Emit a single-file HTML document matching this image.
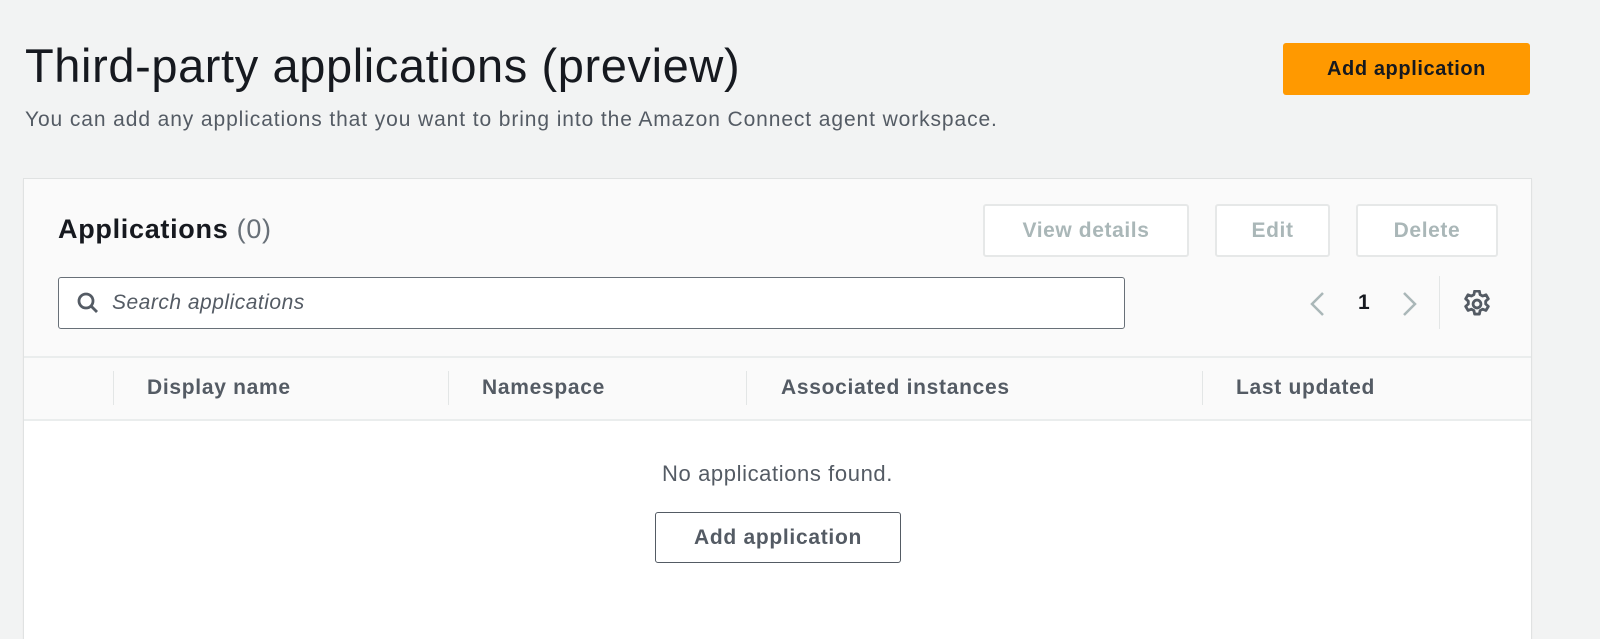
<!DOCTYPE html>
<html><head><meta charset="utf-8"><style>
*{box-sizing:border-box;margin:0;padding:0}
body{width:1600px;height:607px;overflow:hidden;background:#f2f3f3;font-family:"Liberation Sans",sans-serif;color:#16191f;position:relative}
.abs{position:absolute}
h1{position:absolute;left:25px;top:38px;font-size:47px;font-weight:400;letter-spacing:0.6px;color:#16191f;white-space:nowrap}
.sub{left:25px;top:108px;font-size:21px;letter-spacing:0.9px;color:#545b64;white-space:nowrap}
.primary{left:1283px;top:43px;width:247px;height:52px;background:#ff9900;border-radius:3px;font-weight:700;font-size:20px;letter-spacing:0.6px;display:flex;align-items:center;justify-content:center;color:#16191f}
.card{left:24px;top:179px;width:1507px;height:460px;background:#fff;box-shadow:0 0 0 1px #e0e2e2,0 1px 2px rgba(0,0,0,.15)}
.hdr{left:0;top:0;width:100%;height:242px;background:#fafafa}
.btn{border:2px solid #e6e8e8;background:#fff;border-radius:3px;color:#aab7b8;font-weight:700;font-size:21px;letter-spacing:0.6px;display:flex;align-items:center;justify-content:center;height:53px;top:25px}
.search{left:34px;top:98px;width:1067px;height:52px;border:1.5px solid #687078;border-radius:3px;background:#fff}
.search span{position:absolute;left:53px;top:13px;font-style:italic;color:#545b64;font-size:21px;letter-spacing:0.5px}
.col{top:177px;height:65px;border-top:2px solid #eaeded;border-bottom:2px solid #eaeded;width:100%;left:0}
.th{top:197px;font-weight:700;font-size:21px;letter-spacing:0.7px;color:#545b64;white-space:nowrap}
.sep{top:192px;width:1px;height:34px;background:#e3e6e6}
</style></head><body>
<h1>Third-party applications (preview)</h1>
<div class="abs sub">You can add any applications that you want to bring into the Amazon Connect agent workspace.</div>
<div class="abs primary">Add application</div>
<div class="abs card">
 <div class="abs hdr"></div>
 <div class="abs" style="left:34px;top:35px;font-size:27px;font-weight:700;letter-spacing:0.7px">Applications <span style="font-weight:400;color:#687078">(0)</span></div>
 <div class="abs btn" style="left:959px;width:206px">View details</div>
 <div class="abs btn" style="left:1191px;width:115px">Edit</div>
 <div class="abs btn" style="left:1332px;width:142px">Delete</div>
 <div class="abs search">
  <svg class="abs" style="left:17px;top:13px" width="24" height="24" viewBox="0 0 24 24" fill="none" stroke="#545b64" stroke-width="2.8"><circle cx="10" cy="10" r="7"/><path d="M15 15l6 6"/></svg>
  <span>Search applications</span>
 </div>
 <svg class="abs" style="left:1285px;top:112px" width="16" height="26" viewBox="0 0 16 26" fill="none" stroke="#aab7b8" stroke-width="2.5"><path d="M14 2L3 13l11 11"/></svg>
 <div class="abs" style="left:1334px;top:112px;font-weight:700;font-size:21px">1</div>
 <svg class="abs" style="left:1378px;top:112px" width="16" height="26" viewBox="0 0 16 26" fill="none" stroke="#aab7b8" stroke-width="2.5"><path d="M2 2l11 11L2 24"/></svg>
 <div class="abs" style="left:1415px;top:97px;width:1px;height:53px;background:#e3e6e6"></div>
 <svg class="abs" style="left:1439px;top:111px" width="28" height="28" viewBox="2 2 20 20" fill="none" stroke="#545b64" stroke-width="2"><circle cx="12" cy="12" r="2.8"/><path d="M10.3 2.8h3.4l.5 2.5 1.8 1 2.4-.9 1.7 2.9-1.9 1.7v2l1.9 1.7-1.7 2.9-2.4-.9-1.8 1-.5 2.5h-3.4l-.5-2.5-1.8-1-2.4.9-1.7-2.9 1.9-1.7v-2l-1.9-1.7 1.7-2.9 2.4.9 1.8-1z" stroke-linejoin="round"/></svg>
 <div class="abs col"></div>
 <div class="abs sep" style="left:89px"></div>
 <div class="abs sep" style="left:424px"></div>
 <div class="abs sep" style="left:722px"></div>
 <div class="abs sep" style="left:1178px"></div>
 <div class="abs th" style="left:123px">Display name</div>
 <div class="abs th" style="left:458px">Namespace</div>
 <div class="abs th" style="left:757px">Associated instances</div>
 <div class="abs th" style="left:1212px">Last updated</div>
 <div class="abs" style="left:0;width:100%;text-align:center;top:282px;font-size:22px;letter-spacing:0.6px;color:#545b64">No applications found.</div>
 <div class="abs" style="left:631px;top:333px;width:246px;height:51px;border:1.5px solid #545b64;border-radius:3px;font-weight:700;font-size:21px;letter-spacing:0.7px;color:#545b64;display:flex;align-items:center;justify-content:center">Add application</div>
</div>
</body></html>
